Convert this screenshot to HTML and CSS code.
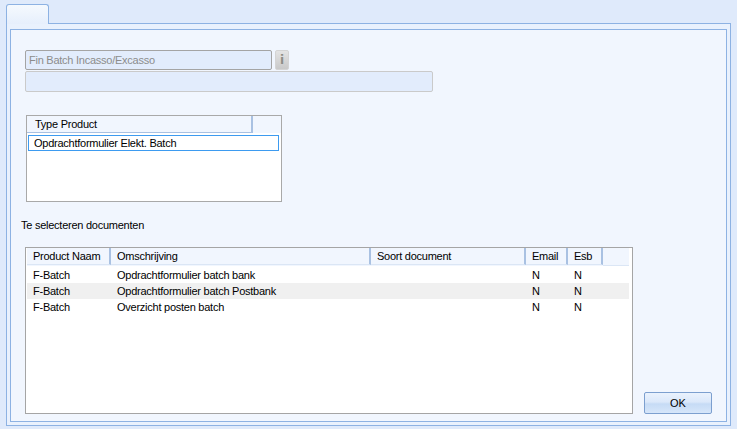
FILE: index.html
```html
<!DOCTYPE html>
<html>
<head>
<meta charset="utf-8">
<link rel="stylesheet" href="styles.css">
</head>
<body>
<div class="window">
  <div class="tab"></div>
  <div class="panel">
    <div class="inner">
      <div class="row-fields">
        <div class="field field-main">Fin Batch Incasso/Excasso</div>
        <div class="info-btn"><span>i</span></div>
      </div>
      <div class="field field-second"></div>
      <div class="listbox">
        <div class="lb-header"><div class="lb-hcell">Type Product</div></div>
        <div class="lb-selected">Opdrachtformulier Elekt. Batch</div>
      </div>
      <div class="label">Te selecteren documenten</div>
      <div class="bottom-row">
        <div class="grid">
          <div class="g-header">
            <div class="g-hcell">Product Naam</div>
            <div class="g-hcell">Omschrijving</div>
            <div class="g-hcell">Soort document</div>
            <div class="g-hcell">Email</div>
            <div class="g-hcell">Esb</div>
            <div class="g-hfill"></div>
          </div>
          <div class="g-row">
            <div class="g-cell">F-Batch</div>
            <div class="g-cell">Opdrachtformulier batch bank</div>
            <div class="g-cell"></div>
            <div class="g-cell">N</div>
            <div class="g-cell">N</div>
            <div class="g-cell"></div>
          </div>
          <div class="g-row alt">
            <div class="g-cell">F-Batch</div>
            <div class="g-cell">Opdrachtformulier batch Postbank</div>
            <div class="g-cell"></div>
            <div class="g-cell">N</div>
            <div class="g-cell">N</div>
            <div class="g-cell"></div>
          </div>
          <div class="g-row">
            <div class="g-cell">F-Batch</div>
            <div class="g-cell">Overzicht posten batch</div>
            <div class="g-cell"></div>
            <div class="g-cell">N</div>
            <div class="g-cell">N</div>
            <div class="g-cell"></div>
          </div>
        </div>
        <button class="ok-btn">OK</button>
      </div>
    </div>
  </div>
</div>
</body>
</html>
```
FILE: styles.css
```css
* { box-sizing: border-box; }
html, body {
  margin: 0;
  padding: 0;
  width: 737px;
  height: 429px;
  overflow: hidden;
  background: #dfeafb;
  font-family: "Liberation Sans", Arial, sans-serif;
  font-size: 11px;
  letter-spacing: -0.25px;
  color: #000;
}
.window {
  padding: 4px 6px 0 6px;
}
.tab {
  position: relative;
  z-index: 1;
  width: 43px;
  height: 20px;
  margin-bottom: -1px;
  border: 1px solid #8db2e3;
  border-bottom: none;
  border-radius: 3px 3px 0 0;
  background: linear-gradient(#f5f9fe, #e6effc);
}
.panel {
  width: 725px;
  height: 403px;
  border: 1px solid #8db2e3;
  background: #e9f1fd;
  padding: 5px 3px 3px 3px;
}
.inner {
  height: 393px;
  border: 1px solid #8db2e3;
  background: #f1f6fe;
  padding: 20px 0 0 14px;
  display: flex;
  flex-direction: column;
  align-items: flex-start;
}
.row-fields {
  display: flex;
  gap: 3px;
  height: 20px;
}
.field {
  background: #e2ecfc;
  border: 1px solid #a4a4a4;
  border-radius: 2px;
  color: #8c8c8c;
  line-height: 18px;
  padding-left: 3px;
}
.field-main {
  width: 247px;
  height: 20px;
}
.info-btn {
  width: 14px;
  height: 20px;
  border: 1px solid #d4d4d4;
  border-radius: 2px;
  background: linear-gradient(#e4e4e4, #c9c9c9);
  display: flex;
  align-items: center;
  justify-content: center;
}
.info-btn span {
  font-family: "DejaVu Sans", sans-serif;
  font-weight: bold;
  font-size: 12px;
  color: #8e8e86;
  line-height: 1;
}
.field-second {
  margin-top: 1px;
  width: 408px;
  height: 21px;
  border-color: #cacaca;
}
.listbox {
  margin-top: 23px;
  margin-left: 1px;
  width: 256px;
  height: 87px;
  border: 1px solid #a9a9a9;
  background: #fff;
}
.lb-header {
  height: 17px;
  background: #f1f6fe;
}
.lb-hcell {
  width: 226px;
  height: 17px;
  border-right: 2px solid #a9c1e2;
  border-bottom: 1px solid #a9c1e2;
  padding-left: 8px;
  line-height: 16px;
}
.lb-selected {
  margin: 2px 2px 0 1px;
  height: 16px;
  border: 1px solid #3d9bf0;
  padding-left: 5px;
  line-height: 14px;
}
.label {
  margin-top: 17px;
  margin-left: -4px;
  line-height: 13px;
}
.bottom-row {
  margin-top: 15px;
  display: flex;
  align-items: flex-end;
}
.grid {
  width: 608px;
  height: 167px;
  border: 1px solid #a5a5a5;
  background: #fff;
  padding: 0 3px 0 1px;
}
.g-header, .g-row {
  display: grid;
  grid-template-columns: 84px 260px 155px 42px 35px 1fr;
}
.g-header {
  height: 18px;
  background: #f1f6fe;
  margin-bottom: 1px;
}
.g-hcell {
  height: 17px;
  border-right: 2px solid #a9c1e2;
  border-bottom: 1px solid #dbe6f5;
  padding-left: 6px;
  line-height: 16px;
  white-space: nowrap;
  overflow: hidden;
}
.g-hfill {
  border-bottom: 1px solid #dbe6f5;
}
.g-row {
  height: 16px;
  line-height: 16px;
}
.g-row.alt {
  background: #f0f0f0;
}
.g-cell {
  padding-left: 6px;
  white-space: nowrap;
  overflow: hidden;
}
.ok-btn {
  margin-left: 11px;
  width: 68px;
  height: 22px;
  border: 1px solid #7c9fcf;
  border-radius: 2px;
  background: linear-gradient(#eaf2fd 0%, #dbe8fa 45%, #c6dbf5 55%, #d6e6fa 100%);
  font-family: "Liberation Sans", Arial, sans-serif;
  font-size: 11px;
  letter-spacing: 0;
  color: #000;
  padding: 0;
}
```
